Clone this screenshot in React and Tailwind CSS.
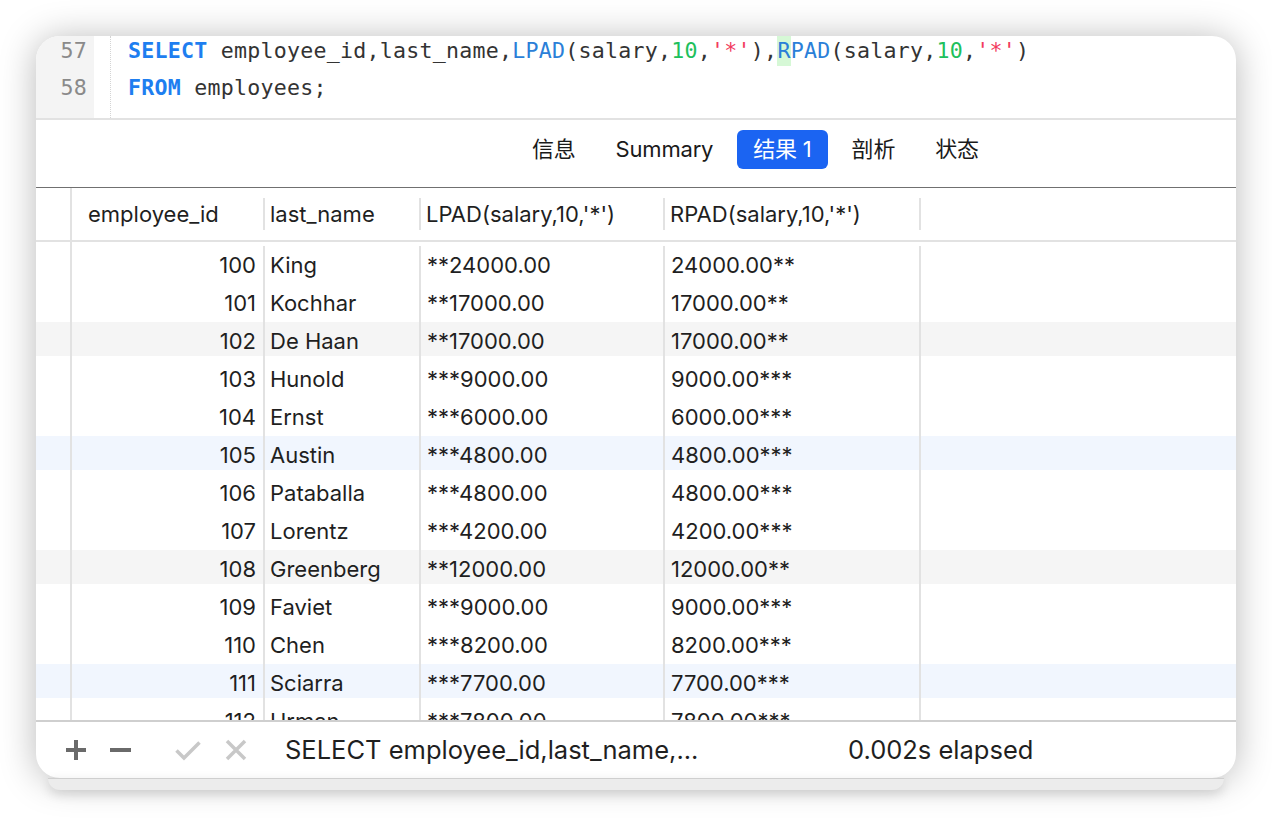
import React from 'react';

const rows = [
  ['100', 'King', '**24000.00', '24000.00**', ''],
  ['101', 'Kochhar', '**17000.00', '17000.00**', ''],
  ['102', 'De Haan', '**17000.00', '17000.00**', 'gray'],
  ['103', 'Hunold', '***9000.00', '9000.00***', ''],
  ['104', 'Ernst', '***6000.00', '6000.00***', ''],
  ['105', 'Austin', '***4800.00', '4800.00***', 'blue'],
  ['106', 'Pataballa', '***4800.00', '4800.00***', ''],
  ['107', 'Lorentz', '***4200.00', '4200.00***', ''],
  ['108', 'Greenberg', '**12000.00', '12000.00**', 'gray'],
  ['109', 'Faviet', '***9000.00', '9000.00***', ''],
  ['110', 'Chen', '***8200.00', '8200.00***', ''],
  ['111', 'Sciarra', '***7700.00', '7700.00***', 'blue'],
  ['112', 'Urman', '***7800.00', '7800.00***', ''],
];

const bandClass = {
  gray: 'bg-[linear-gradient(#f5f5f5,#f5f5f5)] bg-no-repeat bg-[length:100%_34px]',
  blue: 'bg-[linear-gradient(#f1f6fe,#f1f6fe)] bg-no-repeat bg-[length:100%_34px]',
  '': '',
};

const Tab = ({ label, active }) => (
  <div
    className={`h-[39px] px-4 flex items-center rounded-[6px] text-[22px] ${
      active ? 'bg-[#1b64f2] text-white' : 'text-[#1a1a1a]'
    }`}
  >
    {label}
  </div>
);

const HeadCell = ({ w, pl = 'pl-[5px]', children }) => (
  <div className={`${w} h-full flex items-center justify-between shrink-0`}>
    <span className={pl}>{children}</span>
    <span className="w-[2px] h-[32px] bg-[#e2e2e2]" />
  </div>
);

const App = () => {
  return (
    <div className="w-[1272px] h-[826px] bg-white pt-[36px] pl-[36px] overflow-hidden font-['Inter','Noto_Sans_CJK_SC',sans-serif]">
      <div className="w-[1200px] flex flex-col">
        <div className="h-[742px] bg-white rounded-[24px] overflow-hidden flex flex-col shadow-[0_2px_36px_rgba(0,0,0,0.28)]">
          {/* editor */}
          <div className="h-[84px] shrink-0 border-b-2 border-[#e2e2e2] flex overflow-hidden font-['DejaVu_Sans_Mono',monospace] text-[21.6px] tracking-[0.25px] leading-[37px]">
            <div className="w-[58px] h-full bg-[#f4f4f4] text-right pr-[7px] text-[#8a8a8a]">
              <div className="-mt-[4px]">
                <div>57</div>
                <div>58</div>
              </div>
            </div>
            <div className="w-[16px]" />
            <div className="h-full border-l border-dotted border-[#d4d4d4]" />
            <div className="pl-[17px] text-[#333333] whitespace-pre">
              <div className="-mt-[4px]">
                <div>
                  <span className="font-bold text-[#1e7ef0]">SELECT</span> employee_id,last_name,
                  <span className="text-[#2b7fd8]">LPAD</span>(salary,<span className="text-[#20c05c]">10</span>,
                  <span className="text-[#f23a5d]">'*'</span>),
                  <span className="text-[#2b7fd8] bg-[#d6f8d6] py-[3px]">R</span>
                  <span className="text-[#2b7fd8]">PAD</span>(salary,<span className="text-[#20c05c]">10</span>,
                  <span className="text-[#f23a5d]">'*'</span>)
                </div>
                <div>
                  <span className="font-bold text-[#1e7ef0]">FROM</span> employees;
                </div>
              </div>
            </div>
          </div>

          {/* tabs */}
          <div className="h-[68px] shrink-0 border-b border-[#707070] flex items-start pt-[10px] pl-[480px] gap-2 tracking-[-0.2px]">
            <Tab label="信息" />
            <Tab label="Summary" />
            <Tab label="结果 1" active />
            <Tab label="剖析" />
            <Tab label="状态" />
          </div>

          {/* header */}
          <div className="h-[54px] shrink-0 border-b-2 border-[#e2e2e2] flex text-[22px] text-[#1f1f1f]">
            <div className="w-[36px] h-full border-r-2 border-[#e2e2e2] shrink-0" />
            <HeadCell w="w-[193px]" pl="pl-[16px]">employee_id</HeadCell>
            <HeadCell w="w-[156px]">last_name</HeadCell>
            <HeadCell w="w-[244px]">LPAD(salary,10,'*')</HeadCell>
            <HeadCell w="w-[256px]">RPAD(salary,10,'*')</HeadCell>
          </div>

          {/* body */}
          <div className="h-[478px] shrink-0 overflow-hidden flex flex-col text-[22px] text-[#1f1f1f]">
            <div className="h-[4px] shrink-0 flex">
              <div className="w-[36px] h-full border-r-2 border-[#e2e2e2]" />
            </div>
            {rows.map(([id, name, l, r, band]) => (
              <div key={id} className={`h-[38px] shrink-0 flex ${bandClass[band]}`}>
                <div className="w-[36px] h-full border-r-2 border-[#e2e2e2] shrink-0" />
                <div className="w-[193px] h-full border-r-2 border-[#e2e2e2] shrink-0 flex items-center justify-end pr-[7px]">
                  {id}
                </div>
                <div className="w-[156px] h-full border-r-2 border-[#e2e2e2] shrink-0 flex items-center pl-[5px]">
                  {name}
                </div>
                <div className="w-[244px] h-full border-r-2 border-[#e2e2e2] shrink-0 flex items-center pl-[6px]">
                  {l}
                </div>
                <div className="w-[256px] h-full border-r-2 border-[#e2e2e2] shrink-0 flex items-center pl-[6px]">
                  {r}
                </div>
              </div>
            ))}
          </div>

          {/* status bar */}
          <div className="flex-1 border-t-2 border-[#cfcfcf] flex items-center text-[25.5px] text-[#1f1f1f]">
            <svg width="22" height="22" viewBox="0 0 22 22" className="ml-[29px]">
              <path d="M11 1v20M1 11h20" stroke="#6a6a6a" strokeWidth="4" />
            </svg>
            <svg width="21" height="22" viewBox="0 0 21 22" className="ml-[23px]">
              <path d="M0 11h21" stroke="#6a6a6a" strokeWidth="4" />
            </svg>
            <svg width="26" height="22" viewBox="0 0 26 22" className="ml-[44px]">
              <path d="M1.5 11.5l7.5 7.5L24.5 3.5" stroke="#c8c8c8" strokeWidth="3.5" fill="none" />
            </svg>
            <svg width="22" height="22" viewBox="0 0 22 22" className="ml-[24px]">
              <path d="M2 2l18 18M20 2L2 20" stroke="#c8c8c8" strokeWidth="3.5" />
            </svg>
            <span className="ml-[38px] w-[563px]">SELECT employee_id,last_name,...</span>
            <span>0.002s elapsed</span>
          </div>
        </div>
        <div className="mx-[12px] h-[12px] bg-[#ececec] border-t border-[#cfcfcf] rounded-b-[14px] shadow-[0_4px_12px_rgba(0,0,0,0.14)]" />
      </div>
    </div>
  );
};

export default App;
